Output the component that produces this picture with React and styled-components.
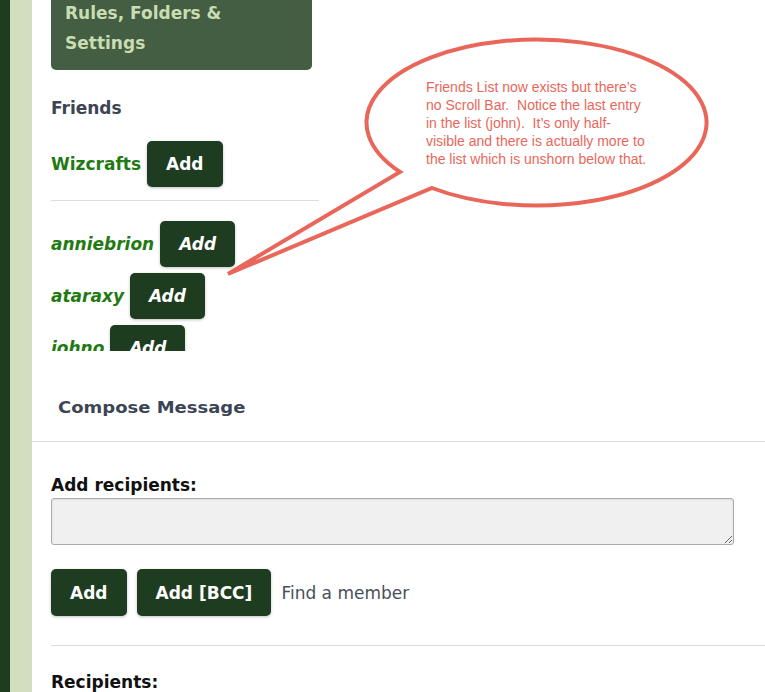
import React from "react";
import styled, { createGlobalStyle } from "styled-components";

const GlobalStyle = createGlobalStyle`
  html, body {
    margin: 0;
    padding: 0;
    background: #ffffff;
    font-family: "DejaVu Sans", Verdana, sans-serif;
    overflow: hidden;
  }
`;

const Page = styled.div`
  position: relative;
  display: flex;
  width: 765px;
  height: 692px;
  overflow: hidden;
`;

const DarkStrip = styled.div`
  width: 10px;
  background: #1e3d20;
`;

const LightStrip = styled.div`
  width: 22px;
  background: #d2dfbf;
`;

const Main = styled.div`
  flex: 1;
  display: flex;
  flex-direction: column;
`;

const Sidebar = styled.div`
  width: 268px;
  margin-left: 19px;
  display: flex;
  flex-direction: column;
`;

const MenuBox = styled.div`
  width: 261px;
  height: 70px;
  box-sizing: border-box;
  padding: 0 14px;
  background: #435e42;
  border-radius: 0 0 5px 5px;
`;

const MenuText = styled.div`
  margin-top: -2px;
  font-size: 17px;
  font-weight: bold;
  line-height: 30px;
  color: #c9dcb2;
`;

const SectionTitle = styled.div`
  margin-top: 26px;
  font-size: 17px;
  font-weight: bold;
  line-height: 24px;
  color: #3d4555;
`;

const FriendRow = styled.div`
  display: flex;
  align-items: center;
  gap: 6px;
  height: 46px;
  margin-top: ${(p) => p.$top || 0}px;
  margin-bottom: 6px;
`;

const FriendName = styled.span`
  font-size: 17px;
  font-weight: bold;
  font-style: ${(p) => (p.$italic ? "italic" : "normal")};
  color: #1f7a12;
`;

const Button = styled.button`
  height: ${(p) => p.$h || 46}px;
  padding: 0 19px;
  border: none;
  border-radius: 5px;
  background: #1e3d20;
  color: #ffffff;
  font-family: "DejaVu Sans", Verdana, sans-serif;
  font-size: 17px;
  font-weight: bold;
  font-style: ${(p) => (p.$italic ? "italic" : "normal")};
  box-shadow: 0 1px 3px rgba(0, 0, 0, 0.25);
`;

const Divider = styled.div`
  height: 1px;
  background: #dddddd;
  margin: ${(p) => p.$m || "0"};
`;

const ScrollList = styled.div`
  height: 150px;
  overflow: hidden;
  padding-top: 20px;
  box-sizing: border-box;
`;

const PanelHeader = styled.div`
  height: 93px;
  box-sizing: border-box;
  padding: 45px 0 0 26px;
  border-bottom: 1px solid #dcdcdc;
`;

const PanelTitle = styled.span`
  display: inline-block;
  font-size: 16.5px;
  font-weight: bold;
  line-height: 24px;
  color: #3d4555;
  transform: scaleX(1.09);
  transform-origin: left center;
`;

const PanelBody = styled.div`
  padding-left: 19px;
  display: flex;
  flex-direction: column;
`;

const Label = styled.div`
  margin-top: 32px;
  font-size: 17px;
  font-weight: bold;
  line-height: 22px;
  color: #111111;
`;

const TextArea = styled.textarea`
  width: 683px;
  height: 47px;
  margin-top: 2px;
  box-sizing: border-box;
  background: #f0f0f0;
  border: 1px solid #aaaaaa;
  border-radius: 3px;
  box-shadow: inset 0 1px 2px rgba(0, 0, 0, 0.08);
  resize: both;
  display: block;
`;

const ButtonRow = styled.div`
  display: flex;
  align-items: center;
  gap: 10px;
  margin-top: 24px;
`;

const FindLink = styled.span`
  font-size: 17px;
  color: #4a4f59;
`;

const Recipients = styled.div`
  font-size: 17px;
  font-weight: bold;
  color: #111111;
  margin-top: 26px;
`;

const Overlay = styled.svg`
  position: absolute;
  left: 0;
  top: 0;
  pointer-events: none;
`;

const Note = styled.div`
  position: absolute;
  left: 426px;
  top: 78px;
  font-family: "Liberation Sans", Arial, sans-serif;
  font-size: 14px;
  line-height: 18px;
  color: #e8675a;
  white-space: pre;
`;

const friends = [
  { name: "anniebrion" },
  { name: "ataraxy" },
  { name: "johno" },
  { name: "kestrel" },
];

export default function App() {
  return (
    <>
      <GlobalStyle />
      <Page>
        <DarkStrip />
        <LightStrip />
        <Main>
          <Sidebar>
            <MenuBox>
              <MenuText>
                Rules, Folders &amp;
                <br />
                Settings
              </MenuText>
            </MenuBox>
            <SectionTitle>Friends</SectionTitle>
            <FriendRow $top={21}>
              <FriendName>Wizcrafts</FriendName>
              <Button>Add</Button>
            </FriendRow>
            <Divider $m="7px 0 0 0" />
            <ScrollList>
              {friends.map((f) => (
                <FriendRow key={f.name}>
                  <FriendName $italic>{f.name}</FriendName>
                  <Button $italic>Add</Button>
                </FriendRow>
              ))}
            </ScrollList>
          </Sidebar>
          <PanelHeader>
            <PanelTitle>Compose Message</PanelTitle>
          </PanelHeader>
          <PanelBody>
            <Label>Add recipients:</Label>
            <TextArea />
            <ButtonRow>
              <Button $h={47}>Add</Button>
              <Button $h={47}>Add [BCC]</Button>
              <FindLink>Find a member</FindLink>
            </ButtonRow>
            <Divider $m="29px 0 0 0" />
            <Recipients>Recipients:</Recipients>
          </PanelBody>
        </Main>
        <Overlay width="765" height="692" viewBox="0 0 765 692">
          <path
            d="M 400 172 A 170 83 0 1 1 432 188 L 228 274 Z"
            fill="#ffffff"
            stroke="#e8675a"
            strokeWidth="4"
            strokeLinejoin="miter"
          />
        </Overlay>
        <Note>
          {"Friends List now exists but there\u2019s\nno Scroll Bar.  Notice the last entry\nin the list (john).  It\u2019s only half-\nvisible and there is actually more to\nthe list which is unshorn below that."}
        </Note>
      </Page>
    </>
  );
}
